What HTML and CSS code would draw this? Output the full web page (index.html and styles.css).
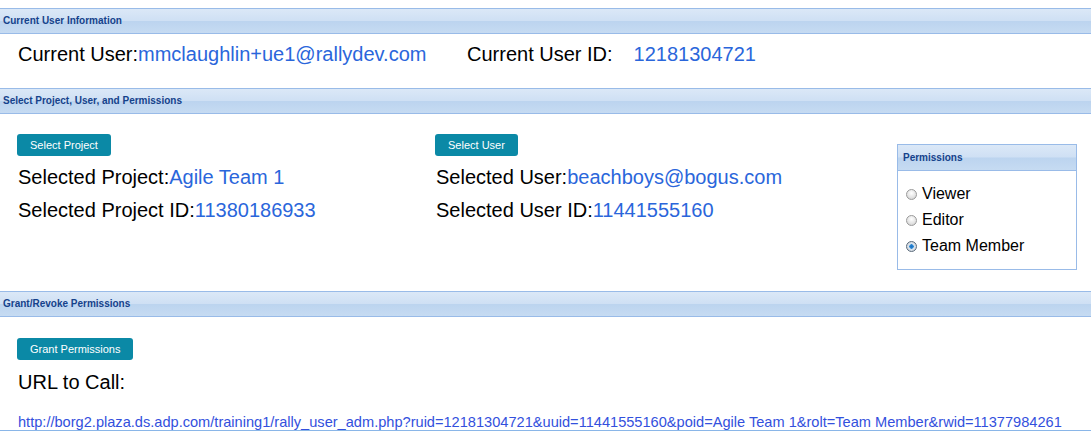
FILE: index.html
```html
<!DOCTYPE html>
<html>
<head>
<meta charset="utf-8">
<link rel="stylesheet" href="styles.css">
</head>
<body>
<div class="page">
  <div class="hdr">Current User Information</div>
  <div class="body1">
    <div class="cell"><span class="lbl">Current User:</span><span class="val">mmclaughlin+ue1@rallydev.com</span></div>
    <div class="cell"><span class="lbl idlbl">Current User ID:</span><span class="val">12181304721</span></div>
  </div>

  <div class="hdr">Select Project, User, and Permissions</div>
  <div class="body2">
    <div class="col col1">
      <button class="btn">Select Project</button>
      <div class="row"><span class="lbl">Selected Project:</span><span class="val">Agile Team 1</span></div>
      <div class="row"><span class="lbl">Selected Project ID:</span><span class="val">11380186933</span></div>
    </div>
    <div class="col col2">
      <button class="btn">Select User</button>
      <div class="row"><span class="lbl">Selected User:</span><span class="val">beachboys@bogus.com</span></div>
      <div class="row"><span class="lbl">Selected User ID:</span><span class="val">11441555160</span></div>
    </div>
    <div class="perm">
      <div class="phdr">Permissions</div>
      <div class="pbody">
        <label class="opt"><input type="radio" name="role" class="radio"><span>Viewer</span></label>
        <label class="opt"><input type="radio" name="role" class="radio"><span>Editor</span></label>
        <label class="opt"><input type="radio" name="role" class="radio" checked><span>Team Member</span></label>
      </div>
    </div>
  </div>

  <div class="hdr">Grant/Revoke Permissions</div>
  <div class="body3">
    <button class="btn">Grant Permissions</button>
    <div class="urllbl">URL to Call:</div>
    <div class="url">http://borg2.plaza.ds.adp.com/training1/rally_user_adm.php?ruid=12181304721&amp;uuid=11441555160&amp;poid=Agile Team 1&amp;rolt=Team Member&amp;rwid=11377984261</div>
  </div>
</div>
</body>
</html>
```

FILE: styles.css
```css
html, body {
  margin: 0;
  padding: 0;
  background: #ffffff;
}
body {
  font-family: "Liberation Sans", Arial, sans-serif;
  color: #000;
}
.page {
  padding-top: 8px;
}
.hdr {
  height: 24px;
  border-top: 1px solid #99bbe8;
  border-bottom: 1px solid #99bbe8;
  background: linear-gradient(to bottom, #dbe8f7 0%, #cfe0f4 48%, #bcd4ef 52%, #c6dbf2 100%);
  color: #15428b;
  font-weight: bold;
  font-size: 10px;
  line-height: 24px;
  padding-left: 3px;
  box-sizing: content-box;
}
.body1 {
  height: 45px;
  padding-top: 9px;
  display: grid;
  grid-template-columns: 449px auto;
  align-items: start;
  padding-left: 18px;
  font-size: 20px;
  line-height: 23px;
}
.lbl { color: #000; }
.val { color: #2a66db; }
.idlbl { margin-right: 21px; }
.body2 {
  display: flex;
  padding: 20px 14px 21px 17px;
}
.col1 { width: 418px; }
.col2 { flex: 1; }
.btn {
  display: block;
  height: 22px;
  padding: 0 13px;
  border: none;
  border-radius: 3px;
  background: #0b89a6;
  color: #fff;
  font-family: "Liberation Sans", Arial, sans-serif;
  font-size: 11px;
  line-height: 22px;
  margin: 0 0 5px 0;
}
.row {
  font-size: 20px;
  line-height: 33px;
  padding-left: 1px;
}
.perm {
  width: 178px;
  margin-top: 10px;
  border: 1px solid #99bbe8;
  align-self: flex-start;
}
.phdr {
  height: 25px;
  border-bottom: 1px solid #99bbe8;
  background: linear-gradient(to bottom, #dbe8f7 0%, #cfe0f4 48%, #bcd4ef 52%, #c6dbf2 100%);
  color: #15428b;
  font-weight: bold;
  font-size: 10px;
  line-height: 25px;
  padding-left: 5px;
}
.pbody {
  padding: 10px 0 10px 8px;
}
.opt {
  display: flex;
  align-items: center;
  height: 26px;
  font-size: 16px;
}
.radio {
  appearance: none;
  -webkit-appearance: none;
  width: 11px;
  height: 11px;
  margin: 0 5px 0 0;
  border-radius: 50%;
  border: 1px solid #9a9a9a;
  background: radial-gradient(circle at 50% 35%, #ffffff 0%, #e2e2e2 60%, #c8c8c8 100%);
  box-sizing: border-box;
}
.radio:checked {
  border-color: #5a6a7a;
  background: radial-gradient(circle at 50% 50%, #1b6fc0 0%, #2d8ad6 32%, #dfe6ee 38%, #c4ccd4 100%);
}
.body3 {
  padding: 21px 0 0 17px;
}
.urllbl {
  font-size: 20px;
  line-height: 34px;
  padding-left: 1px;
}
.url {
  margin-top: 15px;
  margin-left: -17px;
  padding-left: 18px;
  font-size: 14.6px;
  line-height: 16px;
  color: #3350dd;
  border-bottom: 1px solid #8ab6e8;
  white-space: nowrap;
}
```
